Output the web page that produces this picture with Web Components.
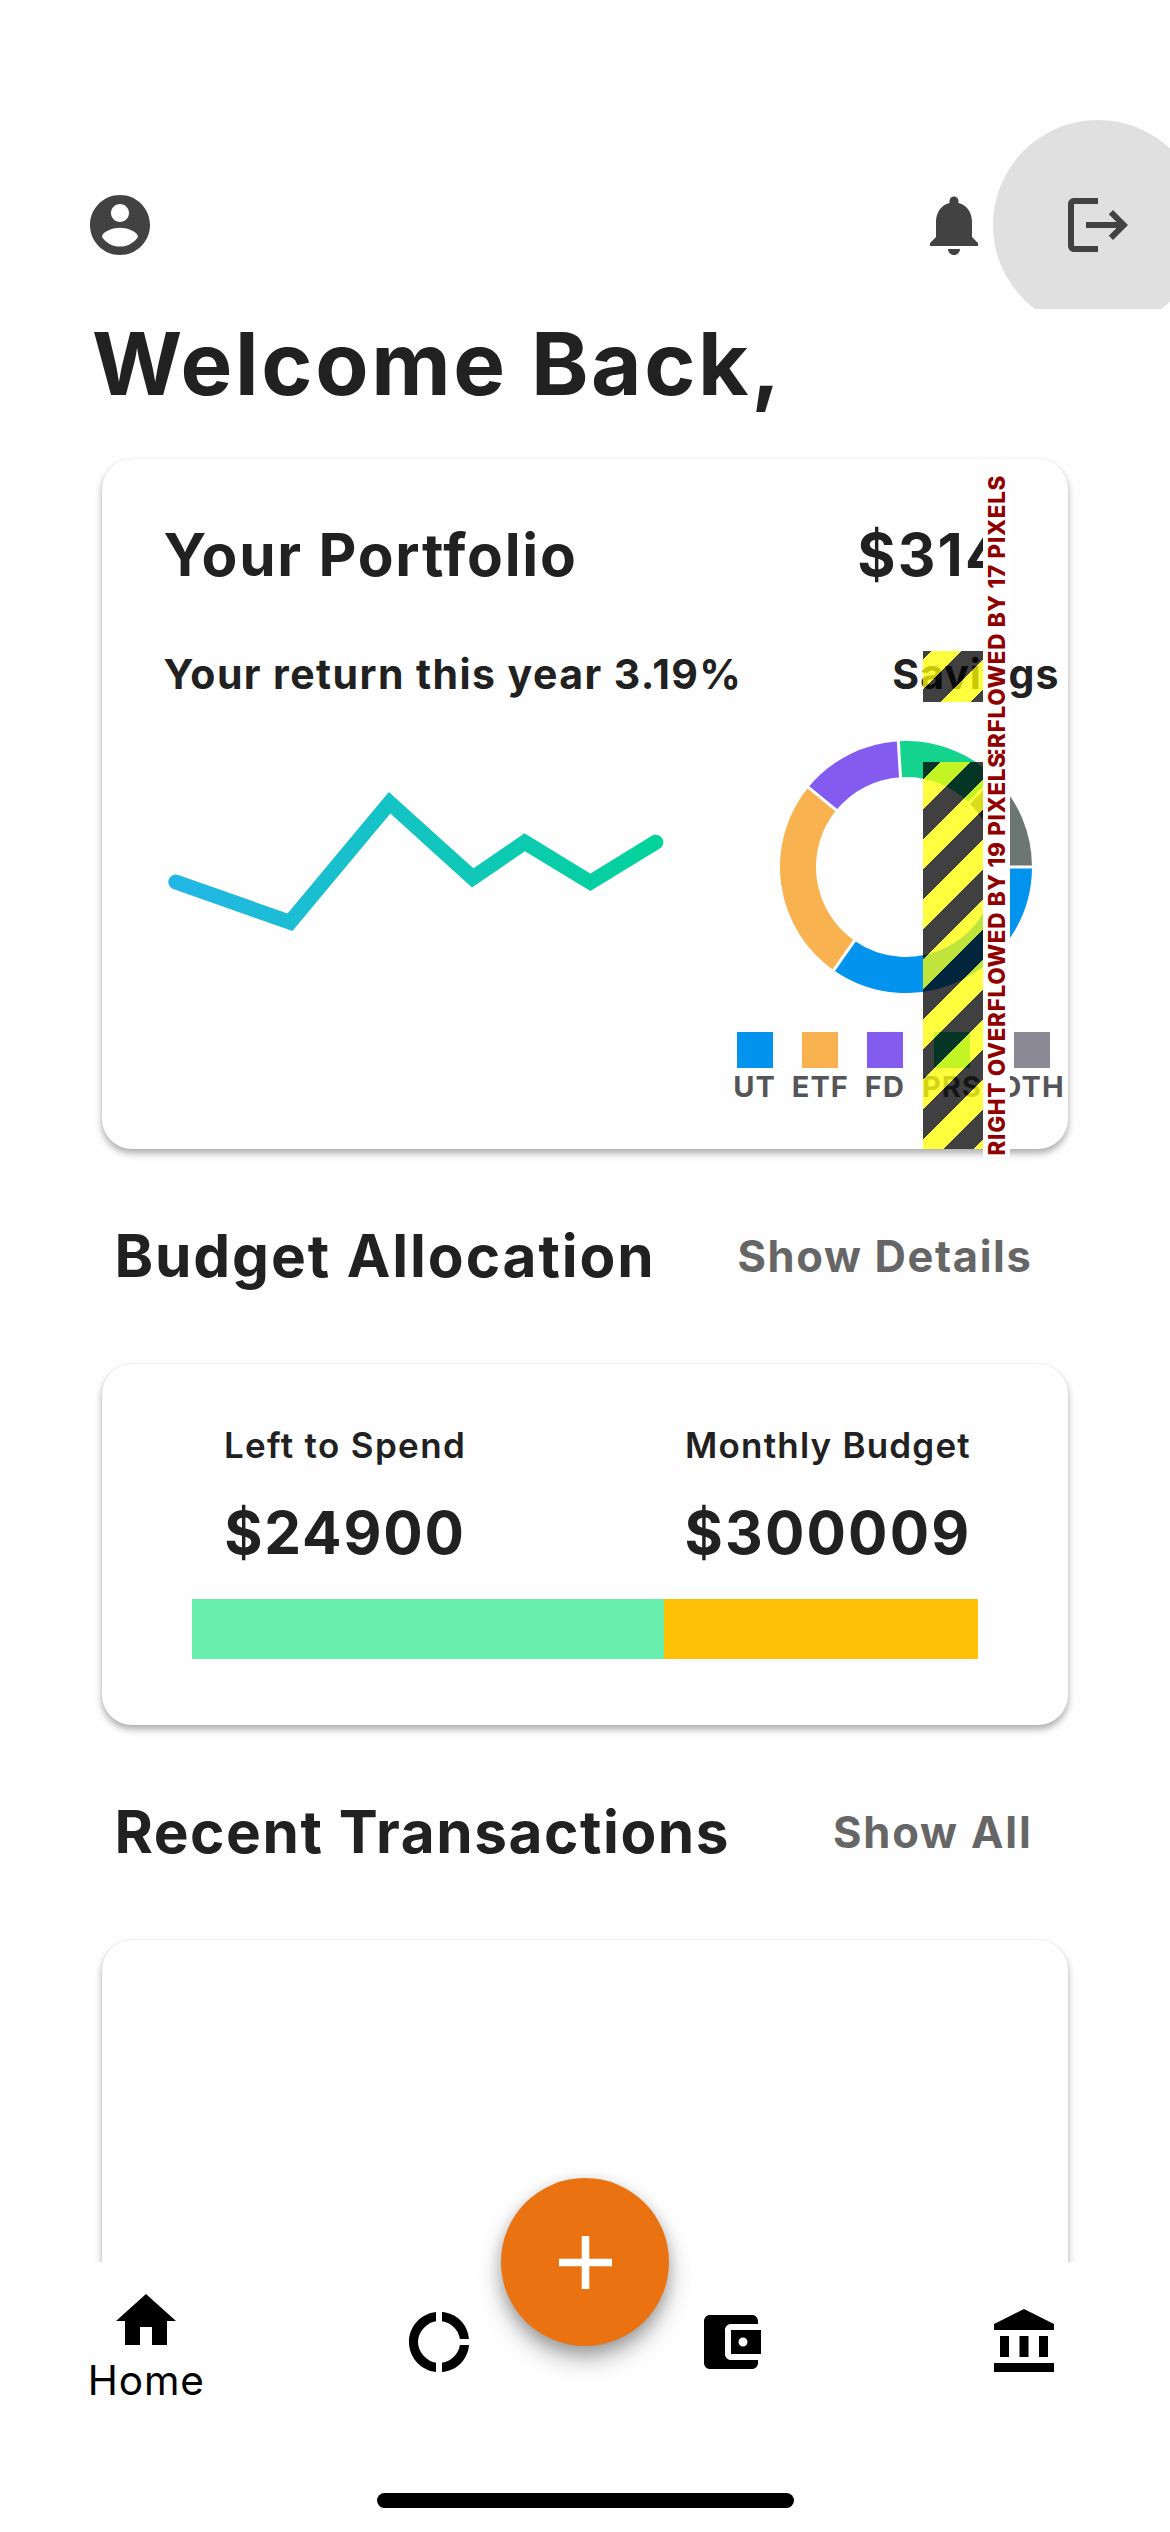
<!DOCTYPE html>
<html lang="en">
<head>
<meta charset="utf-8">
<title>Finance Home</title>
<style>
html,body{margin:0;background:#fefefe}
body{width:1170px;height:2532px;overflow:hidden;font-family:Inter,Roboto,"Liberation Sans",sans-serif;color:#212121}
</style>
</head>
<body>
<finance-app></finance-app>
<script>
const define=(name,html,setup)=>{
  const tpl=document.createElement('template');
  tpl.innerHTML=html;
  customElements.define(name,class extends HTMLElement{
    constructor(){super();this.attachShadow({mode:'open'}).append(tpl.content.cloneNode(true));}
    connectedCallback(){if(setup)setup(this,this.shadowRoot);}
  });
};

/* Single text line: size, tracking and weight come from attributes */
define('ui-text',`<style>
:host{display:block;flex:none;white-space:nowrap;line-height:1.2;font-weight:670}
</style><slot></slot>`,(el)=>{
  el.style.fontSize=el.getAttribute('size')+'px';
  el.style.letterSpacing=(el.getAttribute('track')||0)+'px';
  if(el.hasAttribute('weight'))el.style.fontWeight=el.getAttribute('weight');
});

const ICONS={
  account:'M12 2C6.48 2 2 6.48 2 12s4.48 10 10 10 10-4.48 10-10S17.52 2 12 2zm0 3c1.66 0 3 1.34 3 3s-1.34 3-3 3-3-1.34-3-3 1.34-3 3-3zm0 14.2c-2.5 0-4.71-1.28-6-3.22.03-1.99 4-3.08 6-3.08 1.99 0 5.97 1.09 6 3.08-1.29 1.94-3.5 3.22-6 3.22z',
  bell:'M12 22c1.1 0 2-.9 2-2h-4c0 1.1.9 2 2 2zm6-6v-5c0-3.07-1.63-5.64-4.5-6.32V4c0-.83-.67-1.5-1.5-1.5s-1.5.67-1.5 1.5v.68C7.64 5.36 6 7.92 6 11v5l-2 2v1h16v-1l-2-2z',
  logout:'M17 7l-1.41 1.41L18.17 11H8v2h10.17l-2.58 2.58L17 17l5-5zM4 5h8V3H4c-1.1 0-2 .9-2 2v14c0 1.1.9 2 2 2h8v-2H4V5z',
  home:'M10 20v-6h4v6h5v-8h3L12 3 2 12h3v8z',
  donut:'M11 5.08V2c-5 .5-9 4.81-9 10s4 9.5 9 10v-3.08c-3-.48-6-3.4-6-6.92s3-6.44 6-6.92zM18.97 11H22c-.47-5-4-8.53-9-9v3.08C16 5.51 18.54 8 18.97 11zM13 18.92V22c5-.47 8.53-4 9-9h-3.03c-.43 3-2.97 5.49-5.97 5.92z',
  wallet:'M21 18v1c0 1.1-.9 2-2 2H5c-1.11 0-2-.9-2-2V5c0-1.1.89-2 2-2h14c1.1 0 2 .9 2 2v1h-9c-1.11 0-2 .9-2 2v8c0 1.1.89 2 2 2h9zm-9-2h10V8H12v8zm4-2.5c-.83 0-1.5-.67-1.5-1.5s.67-1.5 1.5-1.5 1.5.67 1.5 1.5-.67 1.5-1.5 1.5z',
  bank:'M4 10v7h3v-7zM10.5 10v7h3v-7zM2 22h20v-3H2zM17 10v7h3v-7zM12 1L2 6v2h20V6z',
  plus:'M19 13h-6v6h-2v-6H5v-2h6V5h2v6h6v2z'
};
define('ui-icon',`<style>
:host{display:block;flex:none;width:72px;height:72px}
svg{display:block;width:100%;height:100%;fill:currentColor}
</style><svg viewBox="0 0 24 24"><path/></svg>`,(el,root)=>{
  root.querySelector('path').setAttribute('d',ICONS[el.getAttribute('name')]);
});

define('top-bar',`<style>
:host{position:relative;display:flex;box-sizing:border-box;height:309px;padding:189px 36px 0 84px;overflow:hidden;color:#424242}
.actions{margin-left:auto;display:flex;gap:72px}
.ripple{position:absolute;left:993.3px;top:120px;width:210px;height:210px;border-radius:50%;background:#e0e0e0}
ui-icon{position:relative}
</style>
<div class="ripple"></div>
<ui-icon name="account"></ui-icon>
<div class="actions"><ui-icon name="bell"></ui-icon><ui-icon name="logout"></ui-icon></div>`);

define('ui-card',`<style>
:host{display:block;position:relative;box-sizing:border-box;margin:0 102px;border-radius:30px;background:#fefefe;
box-shadow:0 4px 6px rgba(0,0,0,.24),0 5px 9px rgba(0,0,0,.1),0 0 2px rgba(0,0,0,.06)}
</style><slot></slot>`);

define('section-header',`<style>
:host{display:flex;box-sizing:border-box;justify-content:space-between;height:215.4px;padding:72.6px 137.5px 0 114.4px}
.link{color:#666;padding-top:8.3px}
</style><slot></slot><div class="link"><slot name="link"></slot></div>`);

/* Debug overflow marker: striped bar with a rotated caption */
define('overflow-marker',`<style>
:host{position:absolute;left:821.3px;width:59.4px}
.bars{position:absolute;inset:0;background:repeating-linear-gradient(135deg,
rgba(0,0,0,.75) 0,rgba(0,0,0,.75) var(--a),rgba(255,255,0,.75) var(--a),rgba(255,255,0,.75) calc(var(--a) + 21.213px),rgba(0,0,0,.75) calc(var(--a) + 21.213px),rgba(0,0,0,.75) 42.426px)}
.label{position:absolute;left:73px;top:50%;width:403px;height:27px;padding-left:1.5px;box-sizing:border-box;margin:-13.5px 0 0 -201.5px;transform:rotate(-90deg);
background:#fff;color:#900000;font-size:22.4px;font-weight:800;letter-spacing:.718px;line-height:27px;white-space:nowrap}
</style><div class="bars"></div><div class="label"><slot></slot></div>`);

define('legend-item',`<style>
:host{display:flex;flex-direction:column;align-items:center;width:40px;gap:1.8px;color:#555557}
.swatch{width:36px;height:36px;background:var(--c)}
</style><div class="swatch"></div><ui-text size="29" track="1.05"><slot></slot></ui-text>`);

define('line-chart',`<style>:host{display:block}svg{display:block}</style>
<svg width="520" height="252" viewBox="164 740.7 520 252" fill="none">
<defs><linearGradient id="g" gradientUnits="userSpaceOnUse" x1="177" y1="0" x2="657" y2="0"><stop stop-color="#23b6e6"/><stop offset="1" stop-color="#02d39a"/></linearGradient></defs>
<polyline points="176.8,881.7 291,922 390.6,802.4 473.7,877.6 525.7,842 591.4,882 656.8,841.9" stroke="url(#g)" stroke-width="15" stroke-linecap="round" stroke-linejoin="miter"/>
</svg>`);

define('donut-chart',`<style>:host{display:block}svg{display:block}</style>
<svg width="252" height="252" viewBox="-126 -126 252 252"><g class="arcs" fill="none" stroke-width="36"></g><g class="gaps" stroke="#fefefe" stroke-width="3"></g></svg>`,(el,root)=>{
  const parts=[[0,125,'#0293ee'],[125,219.2,'#f8b250'],[219.2,266.5,'#845bef'],[266.5,314.5,'#13d38e'],[314.5,360,'#6c7672']];
  const at=(r,d)=>[r*Math.cos(d*Math.PI/180),r*Math.sin(d*Math.PI/180)].map(v=>v.toFixed(2));
  root.querySelector('.arcs').innerHTML=parts.map(([a,b,c])=>`<path stroke="${c}" d="M${at(108,a)}A108 108 0 0 1 ${at(108,b)}"/>`).join('');
  root.querySelector('.gaps').innerHTML=parts.map(([a])=>`<path d="M${at(88,a)}L${at(128,a)}"/>`).join('');
});

define('portfolio-card',`<style>
:host{display:block}
ui-card{height:689.7px;padding:60.6px 0 0 61.4px}
.row{display:flex;justify-content:space-between}
.r1{padding-right:94.8px}
.r2{margin-top:60.7px;padding-right:10px}
.r1 ui-text:last-child{margin-left:auto;width:115.9px}
.r2 ui-text:last-child{margin-left:auto;width:165.7px}
.charts{display:flex;margin-top:41px}
.charts line-chart{margin-right:51.2px}
.pie{display:flex;flex-direction:column;gap:39.3px}
.pie donut-chart{margin-left:45.3px}
.legend{display:flex}
.legend>*+*{margin-left:25.8px}
.legend>:nth-child(3){margin-left:24.5px}
.legend>:nth-child(4){margin-left:27px}
.legend>:nth-child(5){margin-left:40px}
</style>
<ui-card>
<div class="row r1"><ui-text size="58.5" track="1.75">Your Portfolio</ui-text><ui-text size="58.5" track="2.1">$314</ui-text></div>
<div class="row r2"><ui-text size="41" track="1.43">Your return this year 3.19%</ui-text><ui-text size="41" track="1">Savings</ui-text></div>
<div class="charts"><line-chart></line-chart>
<div class="pie"><donut-chart></donut-chart>
<div class="legend">
<legend-item style="--c:#0293ee">UT</legend-item><legend-item style="--c:#f8b250">ETF</legend-item><legend-item style="--c:#845bef">FD</legend-item><legend-item style="--c:#13d38e">PRS</legend-item><legend-item style="--c:#8a8995">OTH</legend-item>
</div></div></div>
<overflow-marker style="top:192px;height:51px;--a:6.15px">RIGHT OVERFLOWED BY 17 PIXELS</overflow-marker>
<overflow-marker style="top:303px;height:387px;--a:12.5px">RIGHT OVERFLOWED BY 19 PIXELS</overflow-marker>
</ui-card>`);

define('budget-card',`<style>
:host{display:block}
ui-card{height:360.6px;padding:60px 90px 0}
.cols{display:flex;justify-content:space-between}
.col{width:306px;display:flex;flex-direction:column;align-items:center;gap:31.6px}
.col+.col{width:300px}
.bar{display:flex;height:60px;margin-top:30.9px}
.left{flex:3;background:#69f0ae}
.used{flex:2;background:#ffc107}
</style>
<ui-card><div class="cols">
<div class="col"><ui-text size="35" track="1.35" weight="640">Left to Spend</ui-text><ui-text size="58.5" track="1.8">$24900</ui-text></div>
<div class="col"><ui-text size="35" track="1.2" weight="640">Monthly Budget</ui-text><ui-text size="58.5" track="2.15">$300009</ui-text></div>
</div><div class="bar"><div class="left"></div><div class="used"></div></div></ui-card>`);

define('nav-bar',`<style>
:host{position:relative;display:flex;flex-direction:column;align-items:center;height:270px;background:#fefefe;color:#000}
.tabs{display:flex;width:100%;height:160px;margin-bottom:71px}
.tab{flex:1;box-sizing:border-box;display:flex;flex-direction:column;align-items:center;justify-content:center}
.active{padding-top:7.2px}
.indicator{width:417px;height:15px;border-radius:8px;background:#000}
.fab{position:absolute;left:501px;top:-84px;width:168px;height:168px;border-radius:50%;background:#ea7211;color:#fff;display:flex;align-items:center;justify-content:center;
box-shadow:0 13px 22px rgba(0,0,0,.3),0 4px 14px rgba(0,0,0,.16)}
.fab ui-icon{width:91px;height:91px}
</style>
<div class="tabs">
<div class="tab active"><ui-icon name="home"></ui-icon><ui-text size="40.5" weight="400" track=".9">Home</ui-text></div>
<div class="tab"><ui-icon name="donut"></ui-icon></div>
<div class="tab"><ui-icon name="wallet"></ui-icon></div>
<div class="tab"><ui-icon name="bank"></ui-icon></div>
</div>
<div class="indicator"></div>
<div class="fab"><ui-icon name="plus"></ui-icon></div>`);

define('finance-app',`<style>
:host{display:flex;flex-direction:column;width:1170px;height:2532px;background:#fefefe}
main{height:2262px;overflow:hidden;flex:none}
.welcome{box-sizing:border-box;height:150px;padding:2.9px 0 0 92px}
.recent{height:500px}
</style>
<main>
<top-bar></top-bar>
<div class="welcome"><ui-text size="87" track="2.65">Welcome Back,</ui-text></div>
<portfolio-card></portfolio-card>
<section-header><ui-text size="58.5" track="1.9">Budget Allocation</ui-text><ui-text slot="link" size="43.5" track="1.62">Show Details</ui-text></section-header>
<budget-card></budget-card>
<section-header><ui-text size="58.5" track="1.56">Recent Transactions</ui-text><ui-text slot="link" size="43.5" track="1.82">Show All</ui-text></section-header>
<ui-card class="recent"></ui-card>
</main>
<nav-bar></nav-bar>`);
</script>
</body>
</html>
